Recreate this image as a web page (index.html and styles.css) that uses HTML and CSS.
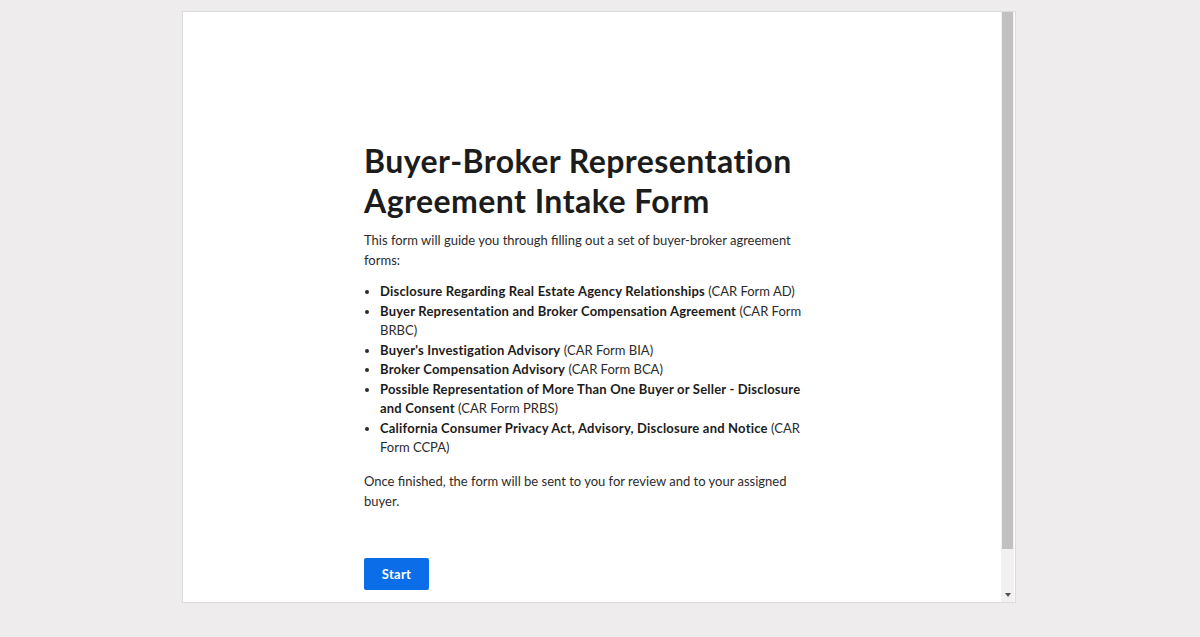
FILE: index.html
```html
<!DOCTYPE html>
<html lang="en">
<head>
<meta charset="utf-8">
<title>Buyer-Broker Representation Agreement Intake Form</title>
<link rel="stylesheet" href="styles.css">
</head>
<body>
<div class="frame">
  <div class="viewport">
    <main class="content">
      <h1 class="title">Buyer-Broker Representation Agreement Intake Form</h1>
      <p class="text">This form will guide you through filling out a set of buyer-broker agreement forms:</p>
      <ul class="forms">
        <li><b>Disclosure Regarding Real Estate Agency Relationships</b> (CAR Form AD)</li>
        <li><b>Buyer Representation and Broker Compensation Agreement</b> (CAR Form BRBC)</li>
        <li><b>Buyer's Investigation Advisory</b> (CAR Form BIA)</li>
        <li><b>Broker Compensation Advisory</b> (CAR Form BCA)</li>
        <li><b>Possible Representation of More Than One Buyer or Seller - Disclosure and Consent</b> (CAR Form PRBS)</li>
        <li><b>California Consumer Privacy Act, Advisory, Disclosure and Notice</b> (CAR Form CCPA)</li>
      </ul>
      <p class="text">Once finished, the form will be sent to you for review and to your assigned buyer.</p>
      <button class="start" type="button">Start</button>
    </main>
  </div>
  <div class="scrollbar">
    <div class="thumb"></div>
    <div class="track"></div>
    <div class="arrow"></div>
  </div>
</div>
</body>
</html>
```
FILE: styles.css
```css
html, body {
  margin: 0;
  padding: 0;
}
body {
  background: #eeecec;
  height: 637px;
  overflow: hidden;
  font-family: Lato, "Open Sans", sans-serif;
}
.frame {
  box-sizing: border-box;
  width: 834px;
  height: 592px;
  margin: 11px 0 0 182px;
  background: #fff;
  border: 1px solid #dcdcdc;
  display: flex;
}
.viewport {
  flex: 1;
  overflow: hidden;
}
.content {
  width: 455px;
  margin: 0 0 0 181px;
  padding-top: 129px;
  color: #2b2b2b;
}
.title {
  margin: 0 0 9px;
  font-size: 32px;
  line-height: 40px;
  font-weight: 700;
  color: #1c1c1c;
  letter-spacing: 0.45px;
}
.text {
  margin: 0;
  font-size: 13px;
  line-height: 20px;
  padding-right: 15px;
}
.forms {
  margin: 12px 0 13px;
  padding: 0 4px 0 16px;
  font-size: 13px;
  line-height: 19.5px;
}
.forms b {
  font-weight: 700;
  color: #1c1c1c;
  letter-spacing: 0.2px;
}
.start {
  margin-top: 47px;
  width: 65px;
  height: 32px;
  border: 0;
  border-radius: 2px;
  background: #0b6de8;
  color: #fff;
  font-family: inherit;
  font-size: 13px;
  font-weight: 700;
  letter-spacing: 0.3px;
  padding: 0;
}
.scrollbar {
  width: 13px;
  margin-right: 1px;
  background: #f1f1f1;
  display: flex;
  flex-direction: column;
  align-items: center;
}
.thumb {
  width: 11px;
  height: 537px;
  background: #c1c1c1;
}
.track {
  flex: 1;
}
.arrow {
  width: 0;
  height: 0;
  margin-bottom: 5px;
  border-left: 3.5px solid transparent;
  border-right: 3.5px solid transparent;
  border-top: 4px solid #505050;
}
```
